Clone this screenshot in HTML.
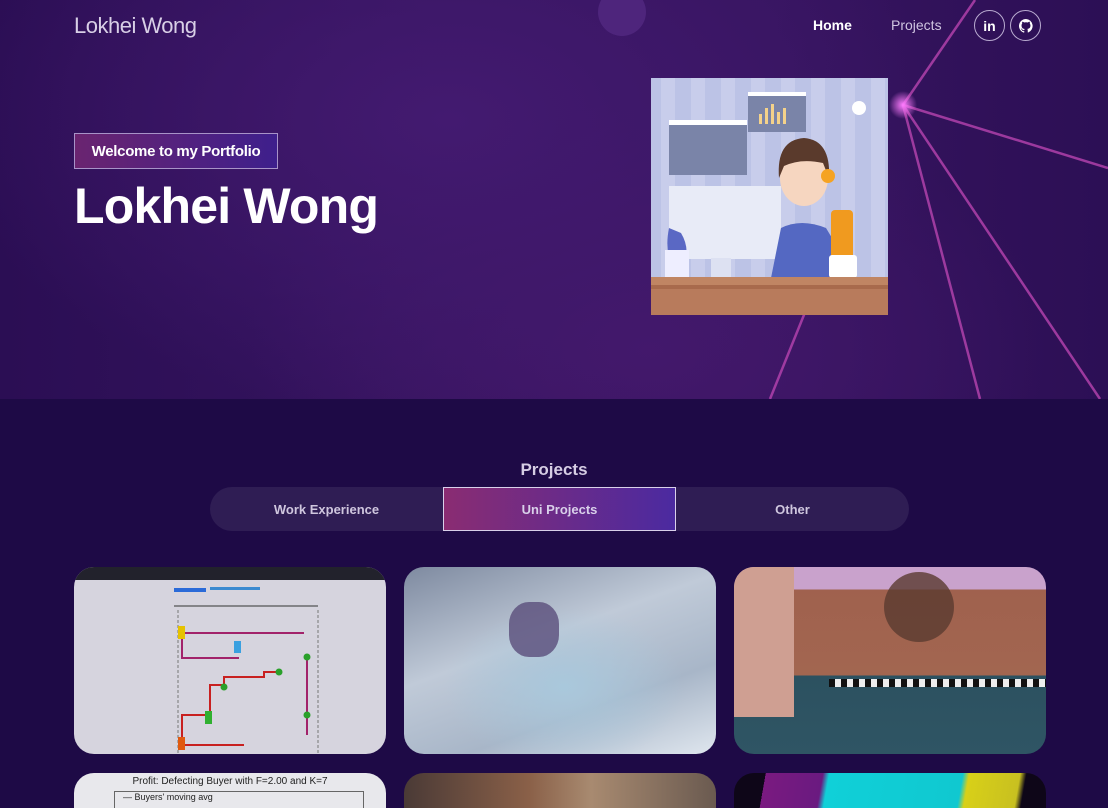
<!DOCTYPE html>
<html><head><meta charset="utf-8"><style>
*{margin:0;padding:0;box-sizing:border-box}
html,body{width:1108px;height:808px;overflow:hidden}
body{background:#1e0a46;font-family:"Liberation Sans",sans-serif;position:relative}
.hero{position:absolute;left:0;top:0;width:1108px;height:399px;background:radial-gradient(ellipse 500px 300px at 450px 120px,#431a70 0%,rgba(67,26,112,0) 100%),radial-gradient(ellipse 400px 250px at 650px 350px,#43186b 0%,rgba(67,24,107,0) 100%),linear-gradient(90deg,#2b0e54,#35145f 40%,#36145f 70%,#2c0f55);overflow:hidden}
.brand{position:absolute;left:74px;top:13px;font-size:22px;color:#d8cfe6;letter-spacing:-0.5px}
.nav{position:absolute;top:17px;font-size:14px;font-weight:bold}
.circ{position:absolute;top:10px;width:31px;height:31px;border:1px solid #b9abd0;border-radius:50%;color:#fff;font-weight:bold;font-size:14px;display:flex;align-items:center;justify-content:center}
.welcome{position:absolute;left:74px;top:133px;width:204px;height:36px;border:1px solid #a893c8;background:linear-gradient(90deg,#6a2470,#3e1f8c);color:#fff;font-weight:bold;font-size:15px;display:flex;align-items:center;justify-content:center;letter-spacing:-0.3px}
h1{position:absolute;left:74px;top:177px;font-size:50px;color:#fff;font-weight:bold;letter-spacing:-0.8px}
.ptitle{position:absolute;left:0;width:1108px;top:460px;text-align:center;color:#d6cde4;font-weight:bold;font-size:17px}
.tabs{position:absolute;left:210px;top:487px;width:699px;height:44px;border-radius:22px;background:#2f1d54}
.tab{position:absolute;top:0;height:44px;display:flex;align-items:center;justify-content:center;color:#cfc6de;font-weight:bold;font-size:13px}
.card{position:absolute;width:312px;height:187px;border-radius:20px;overflow:hidden}
</style></head><body>
<div class="hero">
<svg width="1108" height="399" style="position:absolute;left:0;top:0">
<defs><radialGradient id="g"><stop offset="0" stop-color="#ff7cff"/><stop offset="1" stop-color="#ff7cff" stop-opacity="0"/></radialGradient></defs>
<circle cx="622" cy="12" r="24" fill="#5a2e8a" opacity=".6"/>
<g stroke="#b844b0" stroke-width="2.5" opacity=".8" fill="none">
<line x1="903" y1="105" x2="975" y2="0"/>
<line x1="903" y1="105" x2="1108" y2="168"/>
<line x1="903" y1="105" x2="980" y2="399"/>
<line x1="903" y1="105" x2="1100" y2="399"/>
<line x1="810" y1="300" x2="770" y2="399"/>
</g>
<circle cx="903" cy="105" r="14" fill="url(#g)"/>
</svg>
<div class="brand">Lokhei Wong</div>
<div class="nav" style="left:813px;color:#fff">Home</div>
<div class="nav" style="left:891px;color:#cfc4e0;font-weight:normal">Projects</div>
<div class="circ" style="left:974px">in</div>
<div class="circ" style="left:1010px"><svg width="14" height="14" viewBox="0 0 16 16"><path fill="#fff" d="M8 0a8 8 0 0 0-2.5 15.6c.4 0 .5-.2.5-.4v-1.5c-2.2.5-2.7-1-2.7-1-.4-.9-.9-1.2-.9-1.2-.7-.5.1-.5.1-.5.8.1 1.2.8 1.2.8.7 1.3 1.9.9 2.3.7.1-.5.3-.9.5-1.1-1.8-.2-3.6-.9-3.6-4 0-.9.3-1.6.8-2.1-.1-.2-.4-1 .1-2.1 0 0 .7-.2 2.2.8a7.5 7.5 0 0 1 4 0c1.5-1 2.2-.8 2.2-.8.4 1.1.2 1.9.1 2.1.5.6.8 1.3.8 2.1 0 3.1-1.9 3.7-3.6 3.9.3.3.5.8.5 1.5v2.2c0 .2.1.5.6.4A8 8 0 0 0 8 0z"/></svg></div>
<div class="welcome">Welcome to my Portfolio</div>
<h1>Lokhei Wong</h1>
<svg style="position:absolute;left:651px;top:78px" width="237" height="237" viewBox="0 0 237 237">
<rect width="237" height="237" fill="#bcc3e6"/>
<g fill="#c8cdeb"><rect x="10" width="14" height="200"/><rect x="40" width="14" height="200"/><rect x="70" width="14" height="200"/><rect x="100" width="14" height="200"/><rect x="130" width="14" height="200"/><rect x="160" width="14" height="200"/><rect x="190" width="14" height="200"/><rect x="220" width="14" height="200"/></g>
<rect x="18" y="42" width="78" height="55" fill="#7a84a8"/><rect x="18" y="42" width="78" height="5" fill="#fff"/>
<rect x="97" y="14" width="58" height="40" fill="#7a84a8"/><rect x="97" y="14" width="58" height="4" fill="#fff"/>
<g fill="#f4d28a"><rect x="108" y="36" width="3" height="10"/><rect x="114" y="30" width="3" height="16"/><rect x="120" y="26" width="3" height="20"/><rect x="126" y="34" width="3" height="12"/><rect x="132" y="30" width="3" height="16"/></g>
<circle cx="208" cy="30" r="7" fill="#fff"/>
<rect x="18" y="108" width="112" height="73" fill="#e8ebf7"/><rect x="60" y="180" width="20" height="22" fill="#dde1f2"/>
<path d="M115 225 L130 150 Q150 140 175 150 L205 200 L205 205 Z" fill="#5468c2"/>
<rect x="180" y="132" width="22" height="70" fill="#f09a1f" rx="4"/>
<ellipse cx="153" cy="100" rx="24" ry="28" fill="#f6d6c0"/>
<path d="M128 100 Q125 62 153 60 Q180 62 178 100 L172 85 Q150 80 133 88 Z" fill="#5a3a2c"/>
<circle cx="177" cy="98" r="7" fill="#f5a323"/>
<rect x="178" y="177" width="28" height="23" rx="3" fill="#fff"/>
<path d="M18 150 q-6 30 10 45 q14-20 2-40 z" fill="#5a68c4"/><rect x="14" y="172" width="24" height="28" fill="#eef"/>
<rect y="199" width="237" height="38" fill="#b87b5c"/><rect y="199" width="237" height="8" fill="#c08563"/><rect y="207" width="237" height="4" fill="#a86a4c"/>
</svg>
</div>
<div class="ptitle">Projects</div>
<div class="tabs">
<div class="tab" style="left:0;width:233px">Work Experience</div>
<div class="tab" style="left:233px;width:233px;background:linear-gradient(90deg,#8a2c72,#4b2aa0);border:1px solid #d9d0ea;color:#d9d0ea">Uni Projects</div>
<div class="tab" style="left:466px;width:233px">Other</div>
</div>
<div class="card" style="left:74px;top:567px;background:#d6d4de">
<div style="height:13px;background:#22222c"></div>
<svg width="312" height="174" style="position:absolute;top:13px">
<rect x="100" y="8" width="32" height="4" fill="#2a6ad8"/><rect x="136" y="7" width="50" height="3" fill="#3b8ad0"/>
<line x1="100" y1="26" x2="244" y2="26" stroke="#333"/>
<line x1="104" y1="30" x2="104" y2="174" stroke="#777" stroke-dasharray="3 2"/><line x1="244" y1="30" x2="244" y2="174" stroke="#777" stroke-dasharray="3 2"/>
<path d="M108 53 H230 M108 53 V78 H165 M233 78 V155" stroke="#a2226a" stroke-width="2" fill="none"/>
<path d="M108 165 V135 H136 V105 H150 V97 H190 V92 H205 M108 165 H170" stroke="#c82020" stroke-width="2" fill="none"/>
<rect x="104" y="46" width="7" height="13" fill="#e6c200"/><rect x="160" y="61" width="7" height="12" fill="#3aa0e0"/><rect x="131" y="131" width="7" height="13" fill="#30b030"/><rect x="104" y="157" width="7" height="13" fill="#e05a10"/>
<circle cx="233" cy="77" r="3.5" fill="#2aa02a"/><circle cx="150" cy="107" r="3.5" fill="#2aa02a"/><circle cx="205" cy="92" r="3.5" fill="#2aa02a"/><circle cx="233" cy="135" r="3.5" fill="#2aa02a"/>
</svg></div>
<div class="card" style="left:404px;top:567px;background:radial-gradient(ellipse 120px 80px at 160px 120px,#a9c8dc,rgba(169,200,220,0)),linear-gradient(160deg,#7e8aa0,#c0cad8 40%,#a8b6c8 70%,#dfe6ee)">
<div style="position:absolute;left:105px;top:35px;width:50px;height:55px;border-radius:40%;background:#5a4d7a;opacity:.8"></div></div>
<div class="card" style="left:734px;top:567px;background:linear-gradient(180deg,#c9a2cc 0,#c9a2cc 12%,#a0614e 12%,#a26650 58%,#2c5160 58%,#2f5564)">
<div style="position:absolute;left:0;top:0;width:60px;height:150px;background:#cf9f92"></div>
<div style="position:absolute;left:150px;top:5px;width:70px;height:70px;border-radius:50%;background:#5a3b30;opacity:.8"></div>
<div style="position:absolute;left:95px;top:112px;width:217px;height:8px;background:repeating-linear-gradient(90deg,#111 0 6px,#eee 6px 12px)"></div>
</div>
<div class="card" style="left:74px;top:773px;height:35px;border-radius:20px 20px 0 0;background:#e8e8ec;color:#222;font-size:10px;text-align:center;padding-top:3px">Profit: Defecting Buyer with F=2.00 and K=7
<div style="position:absolute;left:40px;top:18px;width:250px;height:20px;border:1px solid #666;text-align:left;padding-left:8px;font-size:9px">— Buyers' moving avg</div></div>
<div class="card" style="left:404px;top:773px;height:35px;border-radius:20px 20px 0 0;background:linear-gradient(90deg,#4a3a36,#8a6048 40%,#a88a70 60%,#6a5a50)"></div>
<div class="card" style="left:734px;top:773px;height:35px;border-radius:20px 20px 0 0;background:linear-gradient(100deg,#0e0618 0,#0e0618 10%,#7a1a80 10%,#6a1a80 28%,#10d0d8 30%,#10c8d0 72%,#d8d018 74%,#c8c020 90%,#0e0618 92%)"></div>
</body></html>
